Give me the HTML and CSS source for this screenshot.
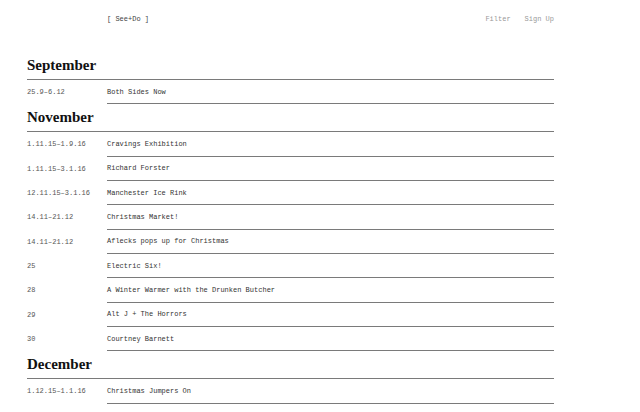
FILE: index.html
```html
<!DOCTYPE html>
<html>
<head>
<meta charset="utf-8">
<link rel="stylesheet" href="styles.css">
</head>
<body>
<div class="page">
  <header class="top">
    <span class="spacer"></span>
    <span class="logo">[ See+Do ]</span>
    <nav class="nav"><span>Filter</span><span>Sign Up</span></nav>
  </header>

  <section class="month">
    <h2>September</h2>
    <ul class="events">
      <li><span class="date">25.9–6.12</span><span class="title">Both Sides Now</span></li>
    </ul>
  </section>

  <section class="month">
    <h2>November</h2>
    <ul class="events">
      <li><span class="date">1.11.15–1.9.16</span><span class="title">Cravings Exhibition</span></li>
      <li><span class="date">1.11.15–3.1.16</span><span class="title">Richard Forster</span></li>
      <li><span class="date">12.11.15–3.1.16</span><span class="title">Manchester Ice Rink</span></li>
      <li><span class="date">14.11–21.12</span><span class="title">Christmas Market!</span></li>
      <li><span class="date">14.11–21.12</span><span class="title">Aflecks pops up for Christmas</span></li>
      <li><span class="date">25</span><span class="title">Electric Six!</span></li>
      <li><span class="date">28</span><span class="title">A Winter Warmer with the Drunken Butcher</span></li>
      <li><span class="date">29</span><span class="title">Alt J + The Horrors</span></li>
      <li><span class="date">30</span><span class="title">Courtney Barnett</span></li>
    </ul>
  </section>

  <section class="month">
    <h2>December</h2>
    <ul class="events">
      <li><span class="date">1.12.15–1.1.16</span><span class="title">Christmas Jumpers On</span></li>
    </ul>
  </section>
</div>
</body>
</html>
```

FILE: styles.css
```css
html, body {
  margin: 0;
  padding: 0;
  background: #fff;
}

.page {
  width: 527px;
  margin-left: 27px;
  font-family: "Liberation Mono", "DejaVu Sans Mono", monospace;
  font-size: 7px;
}

.top {
  display: flex;
  align-items: center;
  height: 52px;
  box-sizing: border-box;
  padding-bottom: 13px;
}

.spacer {
  width: 80px;
  flex: none;
}

.logo {
  color: #444;
  line-height: 9px;
}

.nav {
  margin-left: auto;
  display: flex;
  gap: 14px;
  color: #999;
  line-height: 9px;
}

.month h2 {
  margin: 0;
  font-family: "Liberation Serif", "Times New Roman", serif;
  font-weight: bold;
  font-size: 15px;
  line-height: 22px;
  padding-top: 2px;
  padding-bottom: 3px;
  color: #111;
  border-bottom: 1px solid #7a7a7a;
}

.events {
  list-style: none;
  margin: 0;
  padding: 0;
}

.events li {
  display: grid;
  grid-template-columns: 80px 1fr;
  height: 24.33px;
}

.date {
  color: #555;
  display: flex;
  align-items: center;
}

.title {
  color: #333;
  display: flex;
  align-items: center;
  border-bottom: 1px solid #7a7a7a;
}
```
